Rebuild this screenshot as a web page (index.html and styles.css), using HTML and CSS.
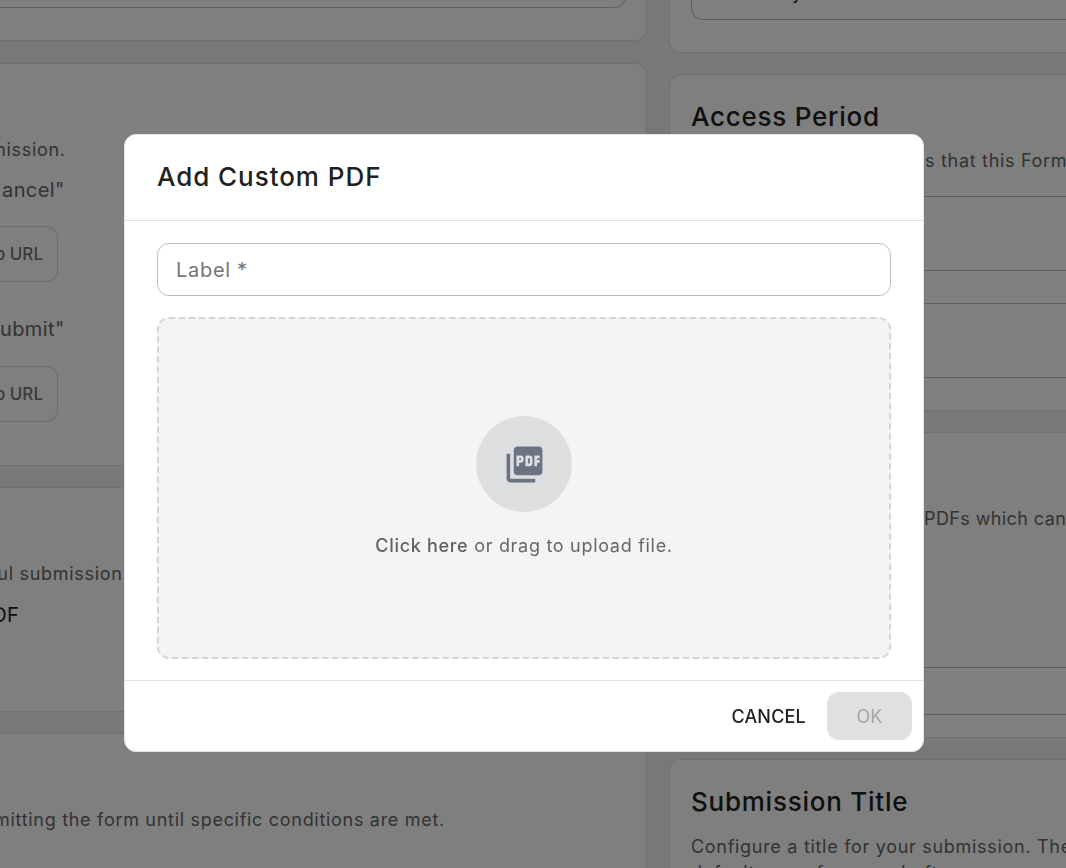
FILE: index.html
```html
<!DOCTYPE html>
<html lang="en">
<head>
<meta charset="utf-8">
<title>Add Custom PDF</title>
<link rel="stylesheet" href="styles.css">
</head>
<body>
<div class="page">
  <div class="col col-left">
    <section class="card card-l1"><div class="field field-l1"></div></section>
    <section class="card card-l2">
      <p class="desc l-mission">mission.</p>
      <p class="opt l-cancel">ancel"</p>
      <div class="ghost ghost-first"><span class="ghost-text">to URL</span></div>
      <p class="opt l-submit">ubmit"</p>
      <div class="ghost"><span class="ghost-text">to URL</span></div>
    </section>
    <section class="card card-l3">
      <p class="desc l-ful">ful submission.</p>
      <p class="strong l-pdf">PDF</p>
    </section>
    <section class="card card-l4">
      <p class="desc l-mitting">mitting the form until specific conditions are met.</p>
    </section>
  </div>
  <div class="col col-right">
    <section class="card card-r1"><div class="field field-r1"><span class="field-text">Summary</span></div></section>
    <section class="card card-r2">
      <h2 class="title">Access Period</h2>
      <p class="desc r-that">s that this Form</p>
      <div class="rule-box"></div>
      <div class="rule-box rule-gap"></div>
    </section>
    <section class="card card-r3">
      <p class="desc r-pdfs">PDFs which can</p>
      <div class="rule-box rule-low"></div>
    </section>
    <section class="card card-r4">
      <h2 class="title">Submission Title</h2>
      <p class="desc r-config">Configure a title for your submission. The<br>default name for your draft</p>
    </section>
  </div>
</div>

<div class="overlay">
  <div class="modal" role="dialog" aria-label="Add Custom PDF">
    <header class="modal-head"><h1 class="modal-title">Add Custom PDF</h1></header>
    <div class="modal-body">
      <div class="input"><span class="placeholder">Label *</span></div>
      <div class="drop">
        <div class="drop-icon">
          <svg class="pdf-icon" viewBox="0 0 24 24" width="43" height="43" aria-hidden="true">
            <path fill="#6b7280" fill-rule="evenodd" d="M20 2H8C6.9 2 6 2.9 6 4v12c0 1.1.9 2 2 2h12c1.1 0 2-.9 2-2V4c0-1.100-.9-2-2-2zM11.500 9.500c0 .83-.67 1.500-1.500 1.500H9v2H7.500V7H10c.83 0 1.500.67 1.500 1.500v1zm5 2c0 .83-.67 1.500-1.500 1.500h-2.500V7H15c.83 0 1.500.67 1.500 1.500v3zm4-3H19v1h1.500V11H19v2h-1.500V7h3v1.500zM9 9.500h1v-1H9v1zM4 6H2v14c0 1.100.9 2 2 2h14v-2H4V6zm10 5.500h1v-3h-1v3z"/>
          </svg>
        </div>
        <p class="drop-text"><span class="drop-strong">Click here</span> or drag to upload file.</p>
      </div>
    </div>
    <footer class="modal-foot">
      <button class="btn btn-text" type="button">CANCEL</button>
      <button class="btn btn-ok" type="button" disabled>OK</button>
    </footer>
  </div>
</div>
</body>
</html>
```

FILE: styles.css
```css
* { box-sizing: border-box; }
html, body { margin: 0; height: 100%; }
body {
  background: #f0f0f0;
  font-family: Inter, "Noto Sans", sans-serif;
  overflow: hidden;
}
p, h1, h2 { margin: 0; font-weight: 400; }

.page { display: flex; gap: 22px; height: 868px; overflow: hidden; }
.col { display: flex; flex-direction: column; gap: 21px; flex: none; }
.col-left { width: 647px; margin-top: -100px; }
.col-right { width: 500px; margin-top: -100px; }

.card {
  background: #fff;
  border: 1px solid #e0e0e0;
  border-radius: 12px;
  flex: none;
  white-space: nowrap;
  overflow: hidden;
}
.col-left .card { border-left: 0; border-top-left-radius: 0; border-bottom-left-radius: 0; }
.col-right .card { border-right: 0; border-top-right-radius: 0; border-bottom-right-radius: 0; }

.card-l1 { height: 141px; padding-top: 40px; }
.field { border: 1px solid #bdbdbd; border-radius: 12px; }
.field-l1 { height: 67px; width: 626px; border-left: 0; border-top-left-radius: 0; border-bottom-left-radius: 0; }
.card-l2 { height: 403px; padding-top: 73px; margin-top: 1px; }
.card-l3 { height: 225px; padding-top: 73px; }
.card-l4 { height: 300px; padding-top: 73px; }

.card-r1 { height: 153px; padding: 50px 0 0 21px; }
.field-r1 { height: 69px; border-right: 0; border-top-right-radius: 0; border-bottom-right-radius: 0; padding: 0 0 0 25px; line-height: 81px; }
.field-text { font-size: 18px; color: #212121; letter-spacing: .7px; }
.card-r2 { height: 337px; padding: 24px 0 0 21px; }
.card-r3 { height: 306px; padding: 73px 0 0 21px; }
.card-r4 { height: 300px; padding: 24px 0 0 21px; }

.title { font-size: 26px; line-height: 36px; font-weight: 500; color: #212121; letter-spacing: .75px; }
.desc { font-size: 18px; line-height: 26px; color: #666; letter-spacing: .7px; }
.opt { font-size: 20px; line-height: 28px; color: #666; letter-spacing: .4px; }
.strong { font-size: 20px; line-height: 28px; color: #212121; letter-spacing: .4px; }

.ghost {
  width: 58px; height: 56px;
  border: 1px solid #d8d8d8; border-left: 0;
  border-radius: 0 12px 12px 0;
  display: flex; align-items: center; justify-content: flex-end;
  padding-right: 14px; overflow: hidden;
  margin-top: 23px;
}
.ghost-first { margin-top: 22px; }
.ghost-text { font-size: 17px; font-weight: 500; color: #757575; }

.l-mission { margin-left: -10px; }
.l-cancel { margin-top: 13px; margin-left: 2px; }
.l-submit { margin-top: 33px; margin-left: 0; }
.l-ful { margin-left: -10px; }
.l-pdf { margin-top: 14px; margin-left: -21px; }
.l-mitting { margin-left: -6px; }
.r-that { margin-left: 234px; margin-top: 13px; }
.r-pdfs { margin-left: 233px; letter-spacing: .4px; }
.r-config { margin-top: 14px; }
.rule-box { height: 75px; margin-top: 22px; border-top: 1px solid #bdbdbd; border-bottom: 1px solid #bdbdbd; }
.rule-gap { margin-top: 32px; }
.rule-low { height: 48px; margin-top: 135px; }

.overlay {
  position: fixed; inset: 0;
  background: rgba(0,0,0,.5);
  display: flex; align-items: flex-start; justify-content: center;
  padding: 134px 18px 0 0;
}
.modal {
  width: 800px; height: 618px;
  background: #fff;
  border-radius: 12px;
  border: 1px solid #e5e5e5;
  display: flex; flex-direction: column;
}
.modal-head {
  height: 86px; flex: none;
  padding: 0 32px 2px;
  display: flex; align-items: center;
  border-bottom: 1px solid #e0e0e0;
}
.modal-title { font-size: 26px; font-weight: 500; color: #212121; letter-spacing: .95px; }
.modal-body {
  flex: 1;
  padding: 22px 32px 21px;
  display: flex; flex-direction: column; gap: 21px;
}
.input {
  height: 53px; flex: none;
  border: 1px solid #bdbdbd; border-radius: 12px;
  padding: 1px 18px 0;
  display: flex; align-items: center;
}
.placeholder { font-size: 20px; color: #757575; letter-spacing: .7px; }
.drop {
  flex: 1;
  background: #f4f4f4;
  border: 2px dashed #d6d6d6;
  border-radius: 12px;
  display: flex; flex-direction: column; align-items: center;
  padding-top: 97px;
}
.drop-icon {
  width: 96px; height: 96px; border-radius: 50%;
  background: #dddee0;
  display: flex; align-items: center; justify-content: center;
}
.drop-text { margin-top: 21px; font-size: 18px; line-height: 26px; color: #666; letter-spacing: .7px; }
.drop-strong { font-weight: 500; color: #616161; }
.modal-foot {
  height: 71px; flex: none;
  border-top: 1px solid #e0e0e0;
  display: flex; align-items: center; justify-content: flex-end;
  gap: 21px;
  padding: 0 11px;
}
.btn { font-family: inherit; font-size: 18px; font-weight: 500; border: 0; background: none; border-radius: 12px; }
.btn-text { color: #212121; letter-spacing: .2px; padding: 0; }
.btn-ok { width: 85px; height: 48px; background: #e0e0e0; color: #a6a6a6; font-weight: 400; }
```
